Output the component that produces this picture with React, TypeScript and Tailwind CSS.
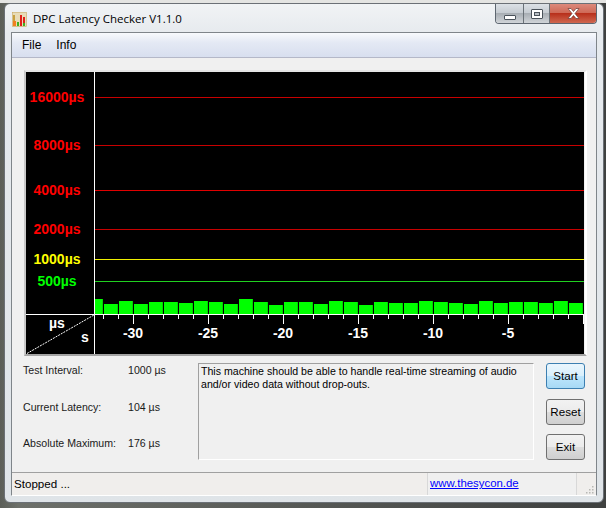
const tops: number[] = [299,304,301,304,302,302,303,301,302,304,299,302,305,302,302,304,301,302,305,302,303,303,301,302,303,304,301,303,302,302,303,301,303];
const barX = (i: number) => (i === 0 ? 95 : 104 + 15 * (i - 1));
const barW = (i: number) => (i === 0 ? 8 : 14);
const lines = [
  { y: 97, c: "#c80000", t: "16000µs", f: "#ff0000" },
  { y: 145, c: "#c80000", t: "8000µs", f: "#ff0000" },
  { y: 190, c: "#e00000", t: "4000µs", f: "#ff0000" },
  { y: 229, c: "#c80000", t: "2000µs", f: "#ff0000" },
  { y: 259, c: "#f0f000", t: "1000µs", f: "#ffff00" },
  { y: 281, c: "#20d020", t: "500µs", f: "#00ff00" },
];
const ticks = Array.from({ length: 33 }, (_, i) => 103 + 15 * i);
const majors = [
  { x: 133, t: "-30" },
  { x: 208, t: "-25" },
  { x: 283, t: "-20" },
  { x: 358, t: "-15" },
  { x: 433, t: "-10" },
  { x: 508, t: "-5" },
];
const chartFont = { fontFamily: "'Liberation Sans', Arial, sans-serif", fontWeight: 700, fontSize: 14 };

function Chart() {
  return (
    <svg width={558} height={282} viewBox="26 72 558 282" className="block" style={chartFont}>
      <rect x={26} y={72} width={558} height={282} fill="#000" />
      {lines.map((l) => (
        <g key={l.t}>
          <line x1={95} x2={584} y1={l.y + 0.5} y2={l.y + 0.5} stroke={l.c} shapeRendering="crispEdges" />
          <text x={57} y={l.y + 5} fill={l.f} textAnchor="middle">{l.t}</text>
        </g>
      ))}
      {tops.map((t, i) => (
        <g key={i}>
          <rect x={barX(i)} y={t} width={barW(i)} height={314 - t} fill="#00ff00" />
          <rect x={barX(i) + barW(i) - 1} y={t} width={1} height={314 - t} fill="#00d800" />
        </g>
      ))}
      <line x1={26} x2={584} y1={314.5} y2={314.5} stroke="#fff" shapeRendering="crispEdges" />
      <line x1={94.5} x2={94.5} y1={72} y2={354} stroke="#fff" shapeRendering="crispEdges" />
      {ticks.map((x) => (
        <line key={x} x1={x + 0.5} x2={x + 0.5} y1={315} y2={(x - 133) % 75 === 0 ? 324 : 319} stroke="#fff" shapeRendering="crispEdges" />
      ))}
      {majors.map((m) => (
        <text key={m.t} x={m.x} y={338} fill="#fff" textAnchor="middle">{m.t}</text>
      ))}
      <line x1={27} y1={353.5} x2={94} y2={315} stroke="#fff" strokeDasharray="2 1" />
      <text x={49} y={328} fill="#fff">µs</text>
      <text x={81} y={342} fill="#fff">s</text>
    </svg>
  );
}

function Stat({ label, value }: { label: string; value: string }) {
  return (
    <div className="flex h-[16px] items-center">
      <span className="w-[105px]">{label}</span>
      <span>{value}</span>
    </div>
  );
}

function Btn({ label, primary, className }: { label: string; primary?: boolean; className?: string }) {
  return (
    <button
      className={
        "flex h-[26px] w-[39px] items-center justify-center rounded-[3px] border text-[11.6px] text-black " +
        (primary
          ? "border-[#3c7fb1] bg-[linear-gradient(#eaf6fd,#d9f0fc_50%,#bee6fd_50%,#a7d9f5)] "
          : "border-[#707070] bg-[linear-gradient(#f2f2f2,#ebebeb_50%,#dddddd_50%,#cfcfcf)] ") +
        (className ?? "")
      }
    >
      {label}
    </button>
  );
}

export default function App() {
  return (
    <div className="h-[508px] w-[606px] overflow-hidden bg-[linear-gradient(#e4e4e2_3px,transparent_3px),linear-gradient(90deg,#5b5e58,#6d706a_3%,#3f4140_98%)] pl-[4px] pt-[3px] font-['Liberation_Sans',sans-serif] text-[10.6px] text-[#1a1a1a]">
      <div className="flex h-[500px] w-[600px] flex-col rounded-[6px] border border-[#6b7076] bg-[linear-gradient(#f1f3f5,#e6eaee_30px,#dfe4e8)] px-[6px] pb-[6px]">
        {/* title bar */}
        <div className="flex h-[28px] shrink-0 items-start justify-between">
          <div className="flex items-center pl-[1px] pt-[7px]">
            <svg width="15" height="15" viewBox="0 0 15 15" className="mr-[6px] block">
              <rect x="0.5" y="0.5" width="14" height="14" fill="#e8dcb8" stroke="#c8a860" strokeWidth="0.6" />
              <rect x="1" y="9" width="3" height="5" fill="#f08020" />
              <rect x="1" y="3" width="2" height="6" fill="#c8a040" />
              <rect x="5" y="10" width="2" height="4" fill="#40b020" />
              <rect x="8" y="3" width="2" height="11" fill="#e02018" />
              <rect x="11" y="5" width="2" height="9" fill="#e02018" />
              <rect x="11" y="11" width="2" height="3" fill="#40b020" />
            </svg>
            <span className="font-['Open_Sans','Noto_Sans',sans-serif] text-[11.5px] leading-[16px] text-black">DPC Latency Checker V1.1.0</span>
          </div>
          <div className="flex h-[20px] w-[102px] overflow-hidden rounded-b-[4px] border border-t-0 border-[#5d6670]">
            <div className="flex w-[28px] items-end justify-center border-r border-[#6b7278] bg-[linear-gradient(#dce1e6,#c6ccd2_45%,#a8aeb4_50%,#d0d4d8)] pb-[3px]">
              <div className="h-[5px] w-[12px] rounded-[1px] border border-[#4a525a] bg-white" />
            </div>
            <div className="flex w-[26px] items-center justify-center border-r border-[#6b7278] bg-[linear-gradient(#dce1e6,#c6ccd2_45%,#a8aeb4_50%,#d0d4d8)]">
              <div className="flex h-[10px] w-[12px] items-center justify-center rounded-[1px] border border-[#4a525a] bg-white">
                <div className="h-[4px] w-[6px] border border-[#4a525a] bg-[#b8bec4]" />
              </div>
            </div>
            <div className="flex flex-1 items-center justify-center bg-[linear-gradient(#dc8a7c,#cf6a58_45%,#b8301c_50%,#d06850)]">
              <svg width="13" height="11" viewBox="0 0 13 11">
                <path d="M1 0.5 H4 L6.5 3.5 L9 0.5 H12 L8 5.5 L12 10.5 H9 L6.5 7.5 L4 10.5 H1 L5 5.5 Z" fill="#fff" stroke="#6a3a34" strokeWidth="0.7" />
              </svg>
            </div>
          </div>
        </div>

        {/* client */}
        <div className="flex min-h-0 flex-1 flex-col border border-[#7f858a] border-b-white bg-[#f0f0f0]">
          <div className="flex h-[25px] shrink-0 items-center gap-[15px] border-b border-[#b4b8c8] bg-[linear-gradient(#f8fafd,#e4e9f4_40%,#d8dfef)] pl-[10px] text-[12px] text-black">
            <span>File</span>
            <span>Info</span>
          </div>

          <div className="ml-[12px] mt-[12px] w-[563px] border-2 border-[#e4e4e4] border-b-[#a4a4a4] border-l-[#c8c8c8] border-r-white">
            <Chart />
          </div>

          <div className="ml-[11px] mt-[7px] flex">
            <div className="flex h-[97px] w-[175px] flex-col justify-between pb-[8px]">
              <Stat label="Test Interval:" value="1000 µs" />
              <Stat label="Current Latency:" value="104 µs" />
              <Stat label="Absolute Maximum:" value="176 µs" />
            </div>
            <div className="h-[97px] w-[336px] border border-[#a0a0a0] border-b-white border-r-white px-[2px] py-[1px] leading-[13px] text-black">
              This machine should be able to handle real-time streaming of audio and/or video data without drop-outs.
            </div>
            <div className="ml-[12px] flex flex-col">
              <Btn label="Start" primary />
              <Btn label="Reset" className="mt-[10px]" />
              <Btn label="Exit" className="mt-[9px]" />
            </div>
          </div>

          <div className="mt-auto flex h-[23px] shrink-0 items-center border-t border-[#a0a0a0] bg-[#f0eeec] text-[11.6px] text-black">
            <span className="w-[415px] pl-[2px]">Stopped ...</span>
            <div className="flex h-full w-[149px] items-center border-l border-[#d8d8d8] bg-[#f0f0f0] pl-[2px]">
              <span className="text-[11.4px] text-[#0000ff] underline">www.thesycon.de</span>
            </div>
            <div className="relative h-full flex-1 border-l border-[#d8d8d8] bg-[#f0eeec]">
              <svg width="9" height="9" viewBox="0 0 9 9" className="absolute bottom-[1px] right-[2px]">
                <path d="M7 1h1.5v1.5H7zM4 4h1.5v1.5H4zM7 4h1.5v1.5H7zM1 7h1.5v1.5H1zM4 7h1.5v1.5H4zM7 7h1.5v1.5H7z" fill="#b8b8b4" />
              </svg>
            </div>
          </div>
        </div>
      </div>
    </div>
  );
}
